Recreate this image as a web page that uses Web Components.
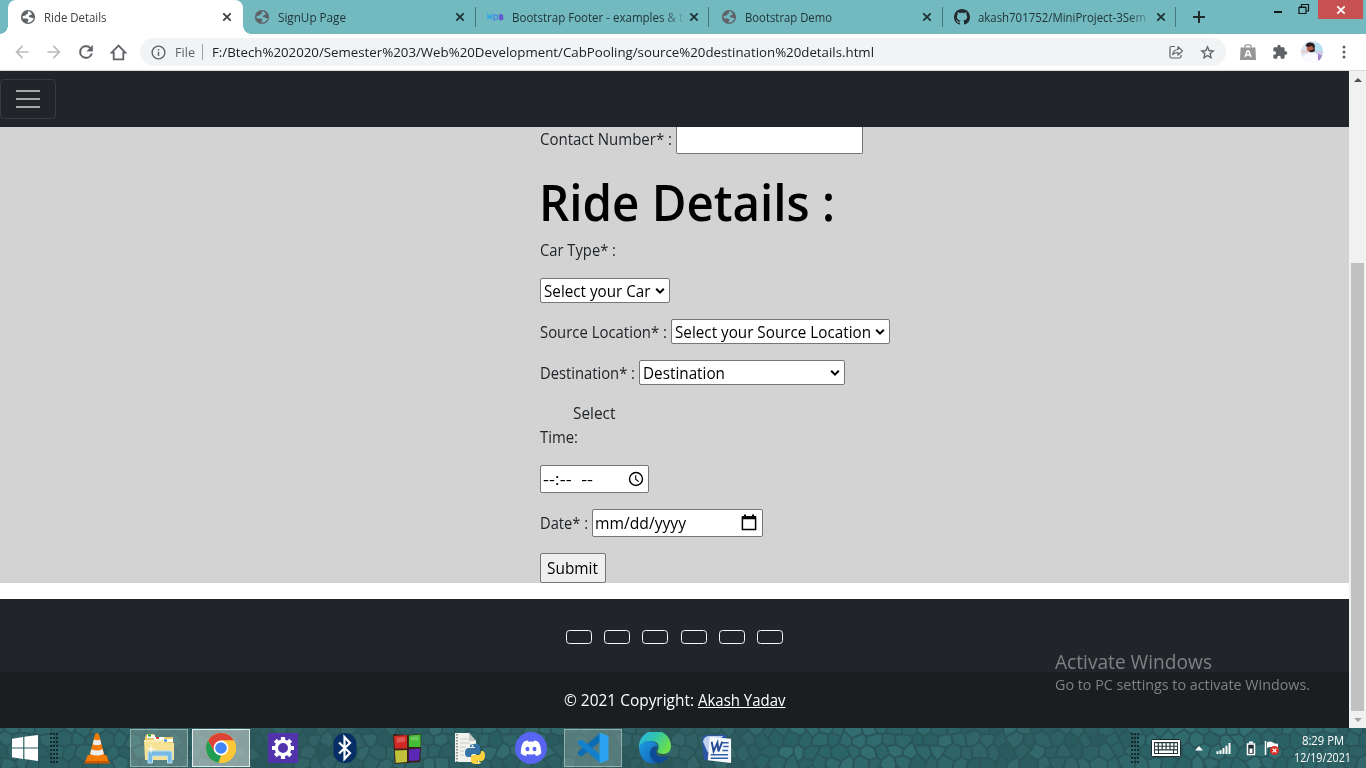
<!DOCTYPE html>
<html lang="en">
<head>
<meta charset="utf-8">
<title>Ride Details</title>
<style>
html,body{margin:0;height:100%;overflow:hidden}
body{font-family:"Open Sans","Noto Sans",sans-serif;font-size:15.5px;color:#212529}
</style>
</head>
<body>
<desktop-screen></desktop-screen>
<script>
const define = (name, html, init) => customElements.define(name, class extends HTMLElement {
  constructor() { super(); this.attachShadow({ mode: 'open' }); }
  connectedCallback() {
    if (this.ready) return;
    this.ready = true;
    this.shadowRoot.innerHTML = typeof html === 'function' ? html(this) : html;
    if (init) init(this, this.shadowRoot);
  }
});

/* Text run condensed or widened to the width given in "w" */
define('fit-text', '<style>:host{display:inline-block;white-space:pre;flex:none}span{display:inline-block;transform-origin:0 50%}</style><span><slot></slot></span>', (el, root) => {
  const s = root.querySelector('span'), w = +el.getAttribute('w');
  const n = s.getBoundingClientRect().width;
  el.style.width = w + 'px';
  if (n) s.style.transform = 'scaleX(' + (w / n) + ')';
});

const ICONS = {
  globe: ['0 0 16 16', '<circle cx="8" cy="8" r="7.1" fill="#5f6368"/><path d="M8.9 2.3c-1 .1-1.300.9-1 1.500.4.700-.3 1.200-1.200 1.400-.8.200-.6 1.300-1.600 1.400-1.100.1-1.800.700-2.700.900.1 1 .4 1.600.700 2 1.700.1 3.500-.2 4.700.4 1.100.5.600 1.700.0 2.300l-.4 1.600c3.100.2 5.800-2 6.300-4.700-.7-.1-1.100.200-1.800-.1-.7-.4-1.100-.7-2.100-.7-1.200 0-1.200-1.200-.4-1.900.7-.7 1.900-.3 2.700-.8-.8-1.500-1.800-2.700-3.200-3.300z" fill="var(--hole,#fff)"/>'],
  mdb: ['0 0 17 16', '<path d="M1 10.500V6l1.800 2.500L4.600 6v4.500" fill="none" stroke="#35a5de" stroke-width="1.400"/><path d="M7 6h1q3 0 3 2.200t-3 2.300H7z" fill="none" stroke="#4b8ddc" stroke-width="1.400"/><path d="M12.800 5.800h2q1.500 1 .3 2.300 1.800 1.200 0 2.500h-2.300z" fill="#6658cc" stroke="#6658cc" stroke-width="1.200"/>'],
  github: ['0 0 16 16', '<path fill="#24292f" d="M8 0C3.580 0 0 3.580 0 8c0 3.540 2.290 6.530 5.470 7.590.4.070.550-.17.550-.38 0-.19-.01-.82-.01-1.490-2.010.37-2.530-.49-2.690-.94-.09-.23-.48-.94-.82-1.130-.28-.15-.68-.52-.01-.53.630-.01 1.080.580 1.230.820.720 1.210 1.870.870 2.330.660.070-.52.280-.87.510-1.070-1.780-.2-3.640-.89-3.640-3.950 0-.87.310-1.590.820-2.150-.08-.2-.36-1.020.080-2.120 0 0 .670-.21 2.200.820.640-.18 1.320-.27 2-.27s1.360.090 2 .270c1.530-1.040 2.200-.82 2.200-.82.440 1.100.160 1.920.080 2.120.510.560.820 1.270.820 2.150 0 3.070-1.870 3.750-3.650 3.950.290.250.540.730.540 1.480 0 1.070-.01 1.930-.01 2.200 0 .210.150.460.550.380A8.010 8.010 0 0 0 16 8c0-4.420-3.580-8-8-8z"/>'],
  close: ['0 0 16 16', '<path d="M4.300 4.300l7.400 7.400M11.700 4.300l-7.400 7.400" stroke="currentColor" stroke-width="1.800"/>'],
  back: ['0 0 24 24', '<path fill="#babcbe" d="M20 11H7.830l5.590-5.590L12 4l-8 8 8 8 1.410-1.410L7.830 13H20z"/>'],
  fwd: ['0 0 24 24', '<path fill="#babcbe" d="M12 4l-1.410 1.410L16.170 11H4v2h12.170l-5.580 5.590L12 20l8-8z"/>'],
  reload: ['0 0 24 24', '<path fill="#5f6368" stroke="#5f6368" stroke-width=".5" d="M17.650 6.350A7.960 7.960 0 0 0 12 4a8 8 0 1 0 7.730 10h-2.080A6 6 0 1 1 12 6c1.660 0 3.140.690 4.220 1.780L13 11h7V4z"/>'],
  home: ['0 0 16 16', '<path d="M8 1.500L1.500 8.200h2v6.300h9V8.200h2z" fill="none" stroke="#5f6368" stroke-width="1.700"/>'],
  info: ['0 0 24 24', '<path fill="#5f6368" d="M11 17h2v-6h-2zm1-15a10 10 0 1 0 0 20 10 10 0 0 0 0-20zm0 18a8 8 0 1 1 0-16 8 8 0 0 1 0 16zM11 9h2V7h-2z"/>'],
  share: ['0 0 16 16', '<path d="M7 2.500H3.500Q2 2.500 2 4v8.500q0 1.500 1.500 1.500h8q1.500 0 1.500-1.500v-1.500" fill="none" stroke="#5f6368" stroke-width="1.200"/><path d="M4.700 10.500c.4-3.500 2.300-4.900 5.300-5V2.800l4.600 4.100L10 11V8.500c-2.500 0-3.900.5-5.300 2z" fill="none" stroke="#5f6368" stroke-width="1.200" stroke-linejoin="round"/>'],
  star: ['0 0 24 24', '<path fill="#5f6368" stroke="#5f6368" stroke-width=".3" d="M22 9.240l-7.190-.62L12 2 9.190 8.630 2 9.240l5.460 4.730L5.820 21 12 17.270 18.180 21l-1.630-7.030zM12 15.400l-3.760 2.270 1-4.280-3.320-2.880 4.380-.38L12 6.100l1.710 4.040 4.380.38-3.320 2.880 1 4.280z"/>'],
  bag: ['0 0 16 16', '<path d="M5 4V2.500Q5 .9 6.500.9h3Q11 .9 11 2.500V4" fill="none" stroke="#999" stroke-width="1.300"/><path d="M.6 3.500h14.800l.6 12.500H0z" fill="#969696"/><path d="M5 13l2.300-6h1.400L11 13M6 11h4" fill="none" stroke="#fff" stroke-width="1.500"/>'],
  puzzle: ['0 0 24 24', '<path fill="#5f6368" d="M20.500 11H19V7a2 2 0 0 0-2-2h-4V3.500a2.500 2.500 0 0 0-5 0V5H4a2 2 0 0 0-2 2v3.800h1.500a2.700 2.700 0 0 1 0 5.400H2V20c0 1.100.9 2 2 2h3.800v-1.500a2.700 2.700 0 0 1 5.400 0V22H17a2 2 0 0 0 2-2v-4h1.500a2.500 2.500 0 0 0 0-5z"/>'],
  avatar: ['0 0 22 22', '<clipPath id="c"><circle cx="11" cy="11" r="11"/></clipPath><g clip-path="url(#c)"><path fill="#d9e6f4" d="M0 0h22v22H0z"/><path fill="#b7e0f3" d="M12 2h10v9H12z"/><path fill="#e9cfd4" d="M0 9h7v3H0z"/><path fill="#d3cbe6" d="M15 10h7v3h-7z"/><path fill="#fbfaff" d="M1 22q-1-7 4-9l4-1.500 6 1.500q4 2 3 9z"/><ellipse cx="9.500" cy="7" rx="3.800" ry="4" fill="#b5644c"/><path d="M4.500 5q1-4 5-3.500 4 0 4.500 4l-1 2.500-2-3-4 1z" fill="#2b2024"/><path d="M8 9q3 1 5.500-2l.5 3q-3 2-5 1z" fill="#33222a"/><path d="M17 13l4 1-2 7-2-2z" fill="#a083d0"/></g>'],
  dots: ['0 0 16 16', '<g fill="#5f6368"><circle cx="8" cy="3" r="1.500"/><circle cx="8" cy="8" r="1.500"/><circle cx="8" cy="13" r="1.500"/></g>'],
  plus: ['0 0 14 14', '<path d="M7 1v12M1 7h12" stroke="#1d2b2d" stroke-width="2"/>'],
  restore: ['0 0 12 12', '<path d="M1 4.500h7v6H1zM1 4h7M3.500 3.500V1.500h7v6.500H8.500M3.500 1.500h7" fill="none" stroke="#10191a" stroke-width="1.200"/>'],
  chev: ['0 0 10 10', '<path d="M1.200 2.800L5 6.600l3.800-3.800" fill="none" stroke="#000" stroke-width="2"/>'],
  clock: ['0 0 16 16', '<circle cx="8" cy="8" r="6.500" fill="none" stroke="#000" stroke-width="1.400"/><path d="M7.700 4.200v4l3 2.400" fill="none" stroke="#000" stroke-width="1.100"/>'],
  cal: ['0 0 16 17', '<path d="M1.400 3h13.200v12.600H1.400z" fill="none" stroke="#000" stroke-width="1.500"/><path d="M1 2.300h14v3H1zM3 .5h2v2H3zM11 .5h2v2h-2z"/>'],
  burger: ['0 0 30 30', '<path stroke="#fff" stroke-opacity=".6" stroke-width="2" d="M3 7h24M3 15h24M3 23h24"/>'],
  win: ['0 0 26 26', '<path fill="#fff" d="M0 3.800L11.200 2v10.400H0zM12.400 1.800L26 0v12.400H12.400zM0 13.500h11.200V24L0 22.300zM12.400 13.500H26V26l-13.600-1.900z"/>'],
  vlc: ['0 0 30 32', '<path d="M5 23h20l3 7.500H2z" fill="#f47c06"/><path d="M2 29h26l.7 2.500H1.300z" fill="#ca5900"/><path d="M13 2q2-1.500 4 0l6.500 23q-8.500 4.500-17 0z" fill="#f47c06"/><path d="M11.700 7.500q3.300 1.500 6.600 0l1.300 4.800q-4.600 2-9.200 0zM9 17.300q6 2.600 12 0l1.300 4.600q-7.300 3-14.600 0z" fill="#eceef0"/>'],
  folder: ['0 0 32 32', '<path d="M2 5l2-3h7l1 3h18v22H2z" fill="#e9cb69"/><path d="M4 3h8v3H4z" fill="#fff"/><path d="M5 2.500h3v2H5z" fill="#13a434"/><path d="M11 5h10v3H11z" fill="#fff"/><path d="M13 5h3v2h-3z" fill="#d8442a"/><path d="M20 7h10v3H20z" fill="#fff"/><path d="M21 7.500h3v2h-3z" fill="#2b83d2"/><path d="M1 8h18l2 3h10v17H2z" fill="#f6e294"/><path d="M1 9h17l2 2" stroke="#fff6cc" fill="none"/><path d="M5 31V21q0-2 2-2h20q2 0 2 2v10h-4.500v-7h-15v7z" fill="#76b9e2" stroke="#b9e3f8"/><path d="M8 11l1 5 5 1-5 1-1 5-1-5-4-1 4-1z" fill="#fff" opacity=".7"/>'],
  chrome: ['0 0 32 32', '<circle cx="16" cy="16" r="15" fill="#fdc735"/><path d="M3 8.500A15 15 0 0 1 29 8.500H16l-6.500 11.300z" fill="#dd4236"/><path d="M3 8.500l6.500 11.300L16 23.500l-2.500 7.300A15 15 0 0 1 3 8.500z" fill="#1f9d55"/><path d="M16 8.500h13a15 15 0 0 1-13.500 22.500l7-11.300z" fill="#fdc735"/><circle cx="16" cy="16" r="7.400" fill="#fff"/><circle cx="16" cy="16" r="5.800" fill="#4285f4"/>'],
  settings: ['0 0 30 30', '<path fill="#5133ab" d="M0 0h30v30H0z"/><g stroke="#fff" stroke-width="4.200"><path d="M15 4v4M15 22v4M4 15h4M22 15h4M7.300 7.300l3 3M19.700 19.700l3 3M22.700 7.300l-3 3M10.300 19.700l-3 3"/></g><circle cx="15" cy="15" r="6.700" fill="#5133ab" stroke="#fff" stroke-width="3.400"/>'],
  bt: ['0 0 24 32', '<rect x=".5" y="1" width="23" height="30" rx="11" fill="#072f66"/><path d="M6 10.500l11 10.500-5.500 6V5l5.500 6L6 21.500" fill="none" stroke="#fff" stroke-width="2.200"/>'],
  blocks: ['0 0 32 32', '<path d="M1 1l16 1 14-1v15l-1 14-14 1-13 1z" fill="#3a2018"/><path d="M2 3l14-1v14H3z" fill="#cf2a24"/><path d="M18 2.500l12.500-1V14.500H18z" fill="#45bc35"/><path d="M3 18l13-.5V30L4 31z" fill="#bfc23a"/><path d="M18 17l12-1-1 12-11 1z" fill="#5a28b5"/><path d="M5 5l9-1v5L5 10zM20 4l8-.5v4h-8z" fill="#fff" opacity=".22"/>'],
  py: ['0 0 32 32', '<path d="M2 1h14l7 8v21H2z" fill="#f1f1ee"/><path d="M16 1l7 8h-7z" fill="#c9c9c4"/><path d="M4 2v28" stroke="#777" stroke-width="1.500" stroke-dasharray="1.500 1.500"/><path d="M7 7h8M7 11h10M7 15h6M7 19h4M7 23h4" stroke="#ccc"/><path d="M21 12q6-1 6 3v5q0 2-3 2h-4q-2 0-2 3h-3q-3 0-3-4 0-5 4-5h6v-1h-5q-1-3 4-3z" fill="#3673a5"/><path d="M24 32q-6 0-6-3v-4q0-2 3-2h4q3 0 3-4h1q3 0 3 5 0 4-3 5h-5v1h4q0 2-4 2z" fill="#fbd13d"/><circle cx="19.500" cy="13.800" r="1" fill="#fff"/><circle cx="25.500" cy="30" r="1" fill="#fff"/>'],
  discord: ['0 0 32 32', '<circle cx="16" cy="16" r="16" fill="#5865f2"/><path fill="#fff" d="M12.800 8.600Q10 9 8.500 10 5.500 15 5.800 21.500 8.500 23.700 11 24l1.200-2q3.800 1 7.600 0l1.200 2q2.500-.3 5.200-2.500.3-6.500-2.700-11.500-1.500-1-4.300-1.400l-.7 1.200q-2.500-.4-5 0z"/><g fill="#5865f2"><ellipse cx="12.500" cy="17" rx="2" ry="2.200"/><ellipse cx="19.500" cy="17" rx="2" ry="2.200"/></g>'],
  code: ['0 0 32 32', '<path d="M23 1L1 20q-1 1 0 2l2 2q1 .7 2 0L24 9z" fill="#0b6cb3"/><path d="M23 31L1 12q-1-1 0-2l2-2q1-.7 2 0l19 15z" fill="#147fcb"/><path d="M22.500.500L31.500 4v24l-9 3.500z" fill="#2aa4f0"/>'],
  edge: ['0 0 32 32', '<defs><linearGradient id="e1" x1="0" y1="0" x2="1" y2=".5"><stop offset="0" stop-color="#2bb5ea"/><stop offset=".5" stop-color="#2fc4ae"/><stop offset="1" stop-color="#6bdf4e"/></linearGradient><linearGradient id="e2" x1="0" y1="0" x2="1" y2="1"><stop offset="0" stop-color="#1b9de2"/><stop offset="1" stop-color="#1261b5"/></linearGradient></defs><path d="M0 15A16 16 0 0 1 32 14c0 6-4 8-8 8-5 0-6-2-5-4s2-9-7-9C5 9 1 12 0 17z" fill="url(#e1)"/><path d="M0 16q2-7 10-7 8 0 9 6-5-2-7 2-3 8 5 14.500Q2 33 0 16z" fill="url(#e2)"/><path d="M19 15c-3-1-8 1-8 6 0 6 5 10 8 10q7-.5 11-7c-8 3-15 0-13-6z" fill="#0c4b99"/>'],
  word: ['0 0 32 32', '<path d="M1 8q0-6 6-6h19v22L3 28z" fill="#2b57a5"/><path d="M2 9q1-6 7-6h14L7 20z" fill="#bed0ee"/><path d="M9 4l22 2v25L7 28z" fill="#f6f8fc"/><path d="M11 9l2 10 4-9 1 9 4-10" fill="none" stroke="#234a94" stroke-width="2"/><path d="M22.500 10h6M23 14h5.500M22 18h6M10 22.500h18M10 26h18" stroke="#355fa8" stroke-width="1.600"/>'],
  keyboard: ['0 0 30 18', '<rect x=".5" y=".5" width="29" height="17" rx="1" fill="#fff" stroke="#172b2d"/><path d="M3 3h24v12H3z" fill="#24383a"/><path d="M4 5.500h22M4 9h22" stroke="#fff" stroke-width="2.600" stroke-dasharray="2.700 1.200"/><path d="M4 12.800h3M8 12.800h14M23 12.800h3" stroke="#fff" stroke-width="2.500"/>'],
  up: ['0 0 8 5', '<path d="M4 0l4 4.500H0z" fill="#fff"/>'],
  signal: ['0 0 16 13', '<path d="M1.500 13v-3M4.500 13V9M7.500 13V6.500M10.500 13V4M13.500 13V1" stroke="#fff" stroke-width="2"/>'],
  battery: ['0 0 10 15', '<path d="M3 1.200h4M1.500 3h7v10.500h-7z" fill="#1b3133" stroke="#fff" stroke-width="1.500"/><path d="M3.500 7.500h3v4.500h-3z" fill="#fff"/>'],
  flag: ['0 0 16 16', '<path d="M1.500 1v14" stroke="#fff" stroke-width="1.500"/><path d="M3 2.500q3-2 6 0t5 1V9q-3 1-5-1T3 8z" fill="#fff"/><circle cx="10.500" cy="10.500" r="4.500" fill="#db2d22"/><path d="M8.600 8.600l3.800 3.800M12.400 8.600l-3.800 3.800" stroke="#fff" stroke-width="1.300"/>'],
  sup: ['0 0 8 4', '<path d="M4 0l4 4H0z" fill="#505050"/>'],
  sdown: ['0 0 8 4', '<path d="M4 4L8 0H0z" fill="#a3a3a3"/>']
};
/* Icon: name, w, h */
define('ui-icon', el => {
  const [vb, body] = ICONS[el.getAttribute('name')];
  const w = el.getAttribute('w') || 16, h = el.getAttribute('h') || w;
  return `<style>:host{display:block;flex:none;width:${w}px;height:${h}px}svg{display:block}</style><svg width="${w}" height="${h}" viewBox="${vb}" preserveAspectRatio="none">${body}</svg>`;
});

define('browser-tab', el => `
<style>
:host{display:flex;align-items:center;box-sizing:border-box;width:233.5px;height:34px;padding:0 7.500px 0 11.500px;flex:none;position:relative;font-size:11.700px;color:#1f3335;--hole:#72b9c0}
.label{margin-left:${el.getAttribute('icon') === 'mdb' ? 7.5 : 8}px;width:172px;margin-right:auto;overflow:hidden;white-space:nowrap;line-height:20px}
:host([fade]) .label{-webkit-mask:linear-gradient(90deg,#000 150px,transparent 174px)}
.sep{position:absolute;right:0;top:7px;width:1px;height:20px;background:#47777c}
:host([active]){--hole:#fff;color:#3c4043}
:host([active]) .sep{display:none}
.bg{display:none}
:host([active]) .bg{display:block;position:absolute;left:-.5px;right:-.5px;top:0;bottom:0;background:#fff;border-radius:8px 8px 0 0;z-index:0}
.bg:before,.bg:after{content:"";position:absolute;bottom:0;width:8px;height:8px}
.bg:before{left:-8px;background:radial-gradient(circle at 0 0,transparent 7.500px,#fff 8px)}
.bg:after{right:-8px;background:radial-gradient(circle at 100% 0,transparent 7.500px,#fff 8px)}
.label,ui-icon{position:relative}
</style>
<div class="bg"></div><ui-icon name="${el.getAttribute('icon')}" w="${el.getAttribute('icon') === 'mdb' ? 17 : 16}" h="16"></ui-icon>
<div class="label"><slot></slot></div><ui-icon name="close" w="16"></ui-icon><i class="sep"></i>`);

define('tab-strip', `
<style>
:host{display:flex;height:34px;background:#72b9c0;padding-left:8.500px;box-sizing:border-box;align-items:flex-start;overflow:hidden}
.plus{padding:10px 0 0 16px}
.ctl{margin-left:auto;display:flex;padding-right:3px}
.min{width:8px;height:2px;background:#10191a;margin:11px 16.500px 0 0}
.res{margin:3px 8px 0 0}
.x{width:45px;height:19px;background:#c75050;color:#fff;display:flex;align-items:center;justify-content:center}
</style>
<browser-tab active icon="globe"><fit-text w="62.500">Ride Details</fit-text></browser-tab>
<browser-tab icon="globe"><fit-text w="68">SignUp Page</fit-text></browser-tab>
<browser-tab icon="mdb" fade><fit-text w="171">Bootstrap Footer - examples &amp; t</fit-text></browser-tab>
<browser-tab icon="globe" style="padding-left:12px"><fit-text w="87">Bootstrap Demo</fit-text></browser-tab>
<browser-tab icon="github" fade><fit-text w="168">akash701752/MiniProject-3Sem</fit-text></browser-tab>
<div class="plus"><ui-icon name="plus" w="14"></ui-icon></div>
<div class="ctl"><div class="min"></div><div class="res"><ui-icon name="restore" w="12"></ui-icon></div><div class="x"><ui-icon name="close" w="16"></ui-icon></div></div>`);

define('tool-bar', `
<style>
:host{display:flex;height:37px;background:#fff;padding-left:6px;box-sizing:border-box;align-items:center;border-bottom:1px solid #d8dadc}
.b{width:32px;display:flex;justify-content:center;flex:none}
.omni{width:1086px;height:28px;border-radius:14px;background:#f1f3f4;margin:0 6px;box-sizing:border-box;display:flex;align-items:center;padding:0 10px;font-size:13.400px;color:#202124;line-height:20px}
.file{color:#5f6368;margin-left:7.500px}
.sep{width:1px;height:16px;background:#9aa0a6;margin:0 9.500px 0 7px}
.grow{flex:1}
</style>
<div class="b"><ui-icon name="back" w="20"></ui-icon></div><div class="b"><ui-icon name="fwd" w="20"></ui-icon></div>
<div class="b"><ui-icon name="reload" w="20"></ui-icon></div><div class="b"><ui-icon name="home" w="17"></ui-icon></div>
<div class="omni"><ui-icon name="info" w="17"></ui-icon><fit-text class="file" w="20">File</fit-text><i class="sep"></i>
<fit-text w="662">F:/Btech%202020/Semester%203/Web%20Development/CabPooling/source%20destination%20details.html</fit-text><span class="grow"></span>
<ui-icon name="share" w="16" style="margin-right:15px"></ui-icon><ui-icon name="star" w="17"></ui-icon></div>
<div class="b"><ui-icon name="bag" w="16"></ui-icon></div><div class="b"><ui-icon name="puzzle" w="16"></ui-icon></div>
<div class="b"><ui-icon name="avatar" w="22"></ui-icon></div><div class="b"><ui-icon name="dots" w="16"></ui-icon></div>`);

/* One line of the form: height h, gap above t */
define('form-row', el => `<style>:host{display:flex;align-items:center;height:${el.getAttribute('h')}px;margin-top:${el.getAttribute('t') || 0}px;line-height:24px;white-space:nowrap}</style><slot></slot>`);

/* Boxed control with optional trailing icon */
define('field-box', el => `
<style>
:host{display:flex;align-items:center;justify-content:space-between;box-sizing:border-box;width:${el.getAttribute('w')}px;height:100%;border:1px solid #767676;border-radius:2px;background:#fff;color:#000;padding:0 4px 0 3px;flex:none}
:host([kind=time]){padding:0 4px 0 1.500px}
:host([kind=date]){padding:0 5.500px 2px 1.500px}
:host([kind=button]){background:#efefef;padding-left:6px}
:host([kind=open]){border-top:0;border-radius:0 0 2px 2px}
</style><slot></slot>`);

define('ride-form', `
<style>
:host{display:flex;flex-direction:column;height:456px;background:#d3d3d3;padding-left:540px;box-sizing:border-box}
.g{width:4px;flex:none}
.h{font-size:50px;font-weight:600;color:#000;line-height:62px;margin:0 0 1px -1.500px}
.up{padding-bottom:3px}
.dn{padding-top:2px}
</style>
<form-row h="27"><fit-text class="up" w="132">Contact Number* :</fit-text><i class="g"></i><field-box kind="open" w="187"></field-box></form-row>
<form-row h="64" t="16"><fit-text class="h" w="296">Ride Details :</fit-text></form-row>
<form-row h="24" t="4"><fit-text w="76">Car Type* :</fit-text></form-row>
<form-row h="25" t="16"><field-box w="130"><fit-text w="106.500">Select your Car</fit-text><ui-icon name="chev" w="10"></ui-icon></field-box></form-row>
<form-row h="25" t="16"><fit-text w="127">Source Location* :</fit-text><i class="g"></i><field-box w="219"><fit-text w="196">Select your Source Location</fit-text><ui-icon name="chev" w="10"></ui-icon></field-box></form-row>
<form-row h="25" t="16"><fit-text w="95">Destination* :</fit-text><i class="g"></i><field-box w="206"><fit-text w="82">Destination</fit-text><ui-icon name="chev" w="10"></ui-icon></field-box></form-row>
<form-row h="24" t="16"><i style="width:33px"></i><fit-text w="42.500">Select</fit-text></form-row>
<form-row h="24"><fit-text w="38">Time:</fit-text></form-row>
<form-row h="28" t="16"><field-box kind="time" w="109"><fit-text w="50">--:--  --</fit-text><ui-icon name="clock" w="16"></ui-icon></field-box></form-row>
<form-row h="28" t="16"><fit-text w="48">Date* :</fit-text><i class="g"></i><field-box kind="date" w="171"><fit-text class="dn" w="91">mm/dd/yyyy</fit-text><ui-icon name="cal" w="16" h="17"></ui-icon></field-box></form-row>
<form-row h="30" t="16"><field-box kind="button" w="66"><fit-text w="51">Submit</fit-text></field-box></form-row>`);

define('nav-bar', `
<style>
:host{display:flex;align-items:center;height:56px;background:#212529}
.t{width:56px;height:40px;box-sizing:border-box;border:1px solid #373a3e;border-radius:4px;display:flex;align-items:center;justify-content:center}
</style><div class="t"><ui-icon name="burger" w="30"></ui-icon></div>`);

define('site-footer', `
<style>
:host{display:flex;flex-direction:column;height:129px;margin-top:16px;background:#212529;color:#fff}
.soc{height:73px;display:flex;justify-content:center;gap:12.200px;padding-top:31px;box-sizing:border-box}
.soc i{width:26px;height:14px;box-sizing:border-box;border:1px solid #f8f9fa;border-radius:3.500px}
.c{height:56px;background:#1a1e21;display:flex;justify-content:center;gap:4.500px;line-height:24px;padding-top:16px;box-sizing:border-box}
a{color:#fff;text-decoration:underline}
</style>
<div class="soc"><i></i><i></i><i></i><i></i><i></i><i></i></div>
<div class="c"><fit-text w="130">© 2021 Copyright:</fit-text><fit-text w="87.500"><a>Akash Yadav</a></fit-text></div>`);

define('scroll-bar', `
<style>
:host{display:flex;flex-direction:column;width:17px;background:#f1f1f1;align-items:center}
.a{height:17px;display:flex;align-items:center}
.thumb{width:13px;height:448px;background:#c1c1c1;margin-top:175px}
</style><div class="a"><ui-icon name="sup" w="8" h="4"></ui-icon></div><div class="thumb"></div><div class="a"><ui-icon name="sdown" w="8" h="4"></ui-icon></div>`);

define('activate-note', `
<style>
:host{position:absolute;left:1055px;top:648px;color:#7f8284;display:flex;flex-direction:column}
.a{font-size:19.300px;line-height:28px}.b{font-size:14.300px;line-height:18px}
</style><fit-text class="a" w="157">Activate Windows</fit-text><fit-text class="b" w="255">Go to PC settings to activate Windows.</fit-text>`);

/* Cracked-stone wallpaper: a jittered honeycomb */
define('stone-texture', '<style>:host{position:absolute;inset:0;overflow:hidden;background:#2b5558}svg{display:block}</style>', (el, root) => {
  const rnd = (a, b) => { const v = Math.sin(a * 127.1 + b * 311.7) * 43758.5453; return v - Math.floor(v); };
  /* one jitter per shared corner, so neighbouring cells meet exactly */
  const pt = (x, y) => { const kx = Math.round(x), ky = Math.round(y); return [(x + (rnd(kx, ky) - .5) * 6).toFixed(1), (y + (rnd(ky, kx + 9) - .5) * 5).toFixed(1)].join(); };
  const cells = [];
  for (let j = -1; j < 5; j++) for (let i = -1; i < 99; i++) {
    const cx = i * 14 + (j & 1 ? 7 : 0), cy = j * 12;
    const p = [[0, -8], [7, -4], [7, 4], [0, 8], [-7, 4], [-7, -4]].map(o => pt(cx + o[0], cy + o[1])).join(' ');
    const t = rnd(i + 3, j + 7), s = Math.sin(cx / 60) * 4 + (cx > 750 ? 4 : 0);
    cells.push(`<polygon points="${p}" fill="rgb(${42 + t * 10 | 0},${90 + t * 15 + s | 0},${94 + t * 14 + s | 0})" stroke="#2b5659" stroke-width="1.800" stroke-linejoin="round"/>`);
  }
  root.innerHTML += `<svg width="1366" height="40">${cells.join('')}</svg>`;
});

define('task-button', el => `
<style>
:host{display:flex;width:58px;height:38px;box-sizing:border-box;align-items:center;justify-content:center;flex:none;border:1px solid transparent}
:host([open]){background:rgba(165,185,180,.35);border-color:rgba(190,205,200,.6)}
:host([current]){background:rgba(200,210,205,.6);border-color:#e4eceb}
</style><ui-icon name="${el.getAttribute('icon')}" w="${el.getAttribute('w') || 32}" h="${el.getAttribute('h') || 32}"></ui-icon>`);

define('task-bar', `
<style>
:host{display:block;position:relative;height:40px;overflow:hidden}
.row{position:relative;display:flex;align-items:center;height:40px;padding-left:12px}
.grip{width:8px;height:31px;flex:none;background:radial-gradient(circle at 1px 1px,#132a2c .8px,transparent 1.100px) 0 0/3px 4px}
.apps{display:flex;gap:4px;margin-left:10px}
.tray{display:flex;align-items:center;margin-left:auto;width:235px}
.clock{display:flex;flex-direction:column;align-items:center;margin-left:14px;color:#fff;font-size:11.700px;line-height:17px;padding-top:2px}
</style>
<stone-texture></stone-texture>
<div class="row"><ui-icon name="win" w="26"></ui-icon><div class="grip" style="margin-left:12px"></div>
<div class="apps"><task-button icon="vlc" w="28"></task-button><task-button open icon="folder"></task-button><task-button open current icon="chrome"></task-button><task-button icon="settings" w="30" h="30"></task-button><task-button icon="bt" w="24"></task-button><task-button icon="blocks" w="30" h="31"></task-button><task-button icon="py"></task-button><task-button icon="discord"></task-button><task-button open icon="code"></task-button><task-button icon="edge"></task-button><task-button icon="word" w="31" h="31" style="padding-right:2px"></task-button></div>
<div class="tray"><div class="grip"></div><ui-icon name="keyboard" w="30" h="18" style="margin-left:12px"></ui-icon><ui-icon name="up" w="8" h="5" style="margin-left:14px"></ui-icon><ui-icon name="signal" w="16" h="12" style="margin-left:13px"></ui-icon><ui-icon name="battery" w="10" h="15" style="margin-left:14px"></ui-icon><ui-icon name="flag" w="16" style="margin-left:8px"></ui-icon>
<div class="clock"><fit-text w="42">8:29 PM</fit-text><fit-text w="57">12/19/2021</fit-text></div></div></div>`);

define('desktop-screen', `
<style>
:host{display:flex;flex-direction:column;width:1366px;height:768px;overflow:hidden;background:#fff;position:relative}
.view{display:flex;height:657px}
.page{width:1349px;display:flex;flex-direction:column}
</style>
<tab-strip></tab-strip><tool-bar></tool-bar>
<div class="view"><div class="page"><nav-bar></nav-bar><ride-form></ride-form><site-footer></site-footer></div><scroll-bar></scroll-bar></div>
<task-bar></task-bar><activate-note></activate-note>`);
</script>
</body>
</html>
